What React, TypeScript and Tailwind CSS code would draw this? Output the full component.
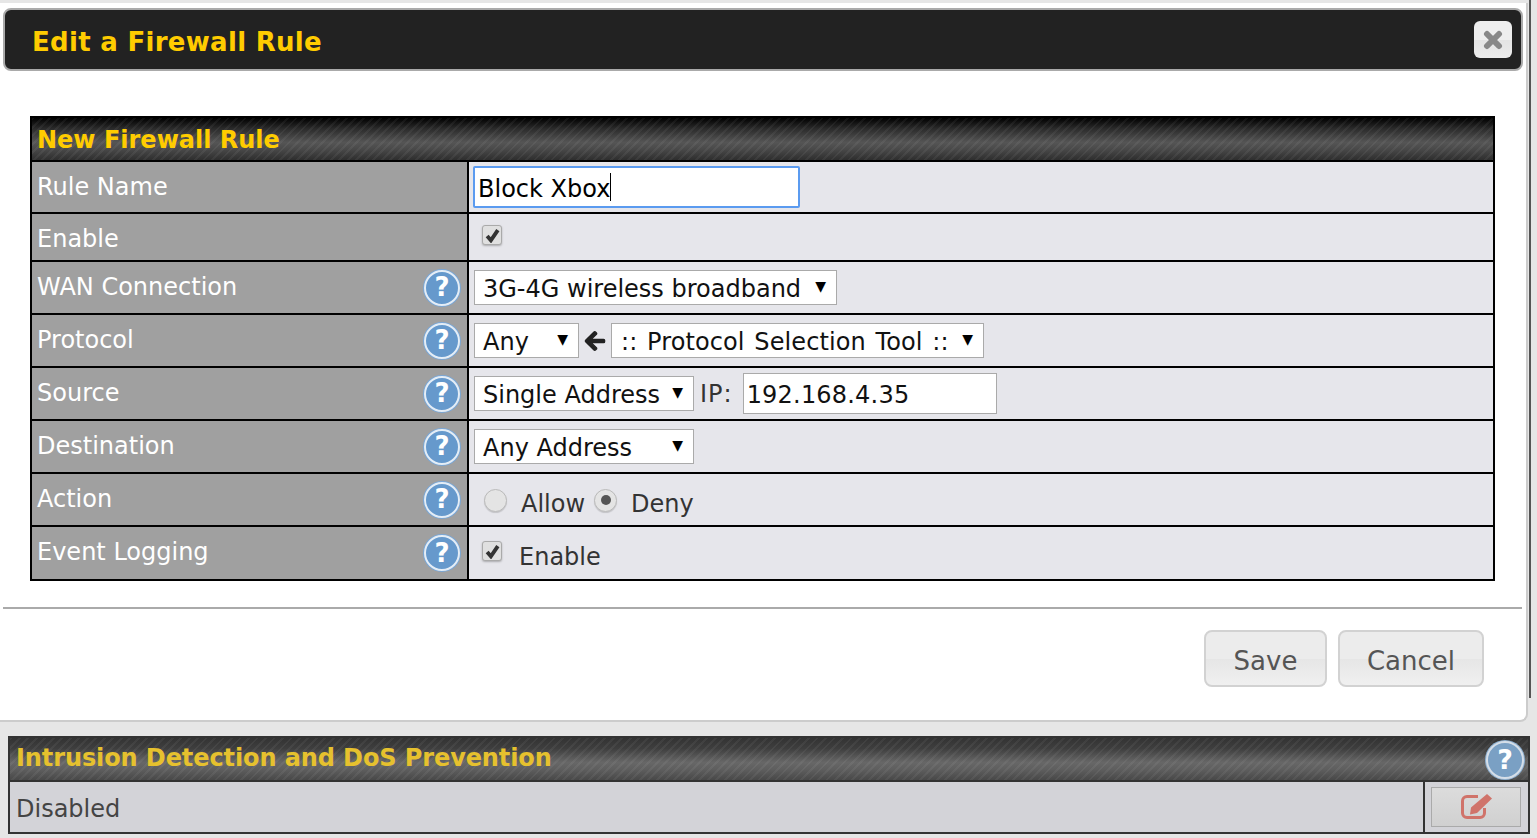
import type { ReactNode } from 'react'
import { FaArrowLeft } from 'react-icons/fa'

const stripes =
  'bg-[repeating-linear-gradient(135deg,rgba(255,255,255,0.05)_0px,rgba(255,255,255,0.05)_2px,transparent_2px,transparent_6px),linear-gradient(to_bottom,#000_0%,#2a2a2a_25%,#555_58%,#484848_75%,#2e2e2e_100%)]'
const stripesDim =
  'bg-[repeating-linear-gradient(135deg,rgba(255,255,255,0.05)_0px,rgba(255,255,255,0.05)_2px,transparent_2px,transparent_6px),linear-gradient(to_bottom,#333_0%,#3e3e3e_25%,#676767_58%,#5e5e5e_75%,#484848_100%)]'

function Help({ dim = false }: { dim?: boolean }) {
  return (
    <div
      className={`flex shrink-0 items-center justify-center rounded-full border-2 font-bold text-white ${
        dim
          ? 'mt-[2px] h-[38px] w-[38px] border-[#d5dee8] bg-[#7aa0c4] text-[27px] shadow-[0_0_0_1px_#8fb0d0]'
          : 'h-[36px] w-[36px] border-[#e4edf6] bg-[#6699cc] text-[26px] shadow-[0_0_0_1px_#7aa7d6]'
      }`}
    >
      ?
    </div>
  )
}

function Select({ text, width, spaced }: { text: string; width: string; spaced?: boolean }) {
  return (
    <div className={`flex h-[35px] items-center justify-between border border-[#aaa] bg-white pl-[8px] pr-[10px] text-[24px] text-[#111] ${width}`}>
      <span className={`mt-[2px] whitespace-nowrap ${spaced ? 'ml-px tracking-[0.1px] [word-spacing:2px]' : ''}`}>{text}</span>
      <span className="-mt-[4px] text-[14px] leading-none text-black">▼</span>
    </div>
  )
}

function Check({ className = '' }: { className?: string }) {
  return (
    <div className={`flex h-[20px] w-[20px] items-center justify-center rounded-[3px] border border-[#aaa] bg-[#e0e0e0] shadow-[0_1px_2px_rgba(0,0,0,0.25)] ${className}`}>
      <svg width="15" height="15" viewBox="0 0 14 14">
        <path d="M2 7.5l3.5 4L12 2" fill="none" stroke="#333" strokeWidth="3.6" />
      </svg>
    </div>
  )
}

function Radio({ on = false }: { on?: boolean }) {
  return (
    <div className="-mt-[7px] flex h-[23px] w-[23px] items-center justify-center rounded-full border border-[#bbb] bg-[#e4e4e4] shadow-[0_1px_1px_rgba(0,0,0,0.15)]">
      {on && <div className="h-[10px] w-[10px] rounded-full bg-[#555]" />}
    </div>
  )
}

function Row({
  label,
  help,
  height,
  last,
  labelClass = '-mt-[2px]',
  children,
}: {
  label: string
  help?: boolean
  height: string
  last?: boolean
  labelClass?: string
  children: ReactNode
}) {
  return (
    <div className={`flex ${height} ${last ? '' : 'border-b-2 border-black'}`}>
      <div className="flex w-[435px] shrink-0 items-center justify-between bg-[#a0a0a0] pl-[5px] pr-[7px] text-[24px] text-white">
        <span className={labelClass}>{label}</span>
        {help && <Help />}
      </div>
      <div className="flex flex-1 items-center border-l-2 border-black bg-[#e6e6eb] pl-[5px]">{children}</div>
    </div>
  )
}

export default function App() {
  return (
    <div className="relative h-[838px] w-full overflow-hidden bg-[#e6e6e6] pt-[3px] font-['DejaVu_Sans',sans-serif]">
      <div className="h-[719px] w-[1528px] rounded-br-lg border-r-2 border-b-2 border-[#ccc] bg-white pl-[3px] pt-[5px]">
        <div className="flex h-[63px] w-[1520px] items-center justify-between rounded-lg border-2 border-[#aaa] bg-[#222] pl-[27px] pr-[9px]">
          <h1 className="mt-[6px] text-[26px] font-bold tracking-[0.3px] text-[#ffcc00]">Edit a Firewall Rule</h1>
          <div className="flex h-[37px] w-[38px] items-center justify-center rounded-md bg-[linear-gradient(to_bottom,#eee_50%,#e4e4e4_52%,#ececec_100%)]">
            <svg width="20" height="20" viewBox="0 0 20 20">
              <path d="M4 4l12 12M16 4L4 16" stroke="#888" strokeWidth="6" strokeLinecap="round" fill="none" />
            </svg>
          </div>
        </div>

        <div className="ml-[27px] mt-[45px] w-[1465px] border-2 border-black">
          <div className={`flex h-[44px] items-center border-b-2 border-black pl-[5px] ${stripes}`}>
            <h2 className="mt-[2px] text-[24px] font-bold text-[#ffcc00]">New Firewall Rule</h2>
          </div>
          <Row label="Rule Name" height="h-[52px]" labelClass="">
            <div className="-ml-px flex h-[42px] w-[327px] items-center rounded-[2px] border-2 border-[#5b9bf0] bg-white pl-[3px] pt-[4px] text-[24px] text-black">
              Block Xbox<span className="-mt-[4px] h-[28px] w-px bg-black" />
            </div>
          </Row>
          <Row label="Enable" height="h-[48px]" labelClass="mt-[4px]">
            <Check className="-mt-[4px] ml-[8px]" />
          </Row>
          <Row label="WAN Connection" help height="h-[53px]">
            <Select text="3G-4G wireless broadband" width="w-[363px]" />
          </Row>
          <Row label="Protocol" help height="h-[53px]">
            <Select text="Any" width="w-[105px]" />
            <FaArrowLeft size={22} stroke="currentColor" strokeWidth={30} className="mx-[5px] text-[#222]" />
            <Select text=":: Protocol Selection Tool ::" width="w-[373px]" spaced />
          </Row>
          <Row label="Source" help height="h-[53px]">
            <Select text="Single Address" width="w-[220px]" />
            <span className="ml-[6px] text-[24px] tracking-[1px] text-[#333]">IP:</span>
            <input
              readOnly
              value="192.168.4.35"
              className="-mt-px ml-[10px] h-[41px] w-[254px] border border-[#aaa] bg-white pl-[3px] pt-[4px] text-[24px] tracking-[0.2px] text-[#111] outline-none"
            />
          </Row>
          <Row label="Destination" help height="h-[53px]">
            <Select text="Any Address" width="w-[220px]" />
          </Row>
          <Row label="Action" help height="h-[53px]">
            <div className="ml-[10px] mt-[8px] flex items-center text-[24px] text-[#333]">
              <Radio />
              <span className="ml-[14px]">Allow</span>
              <div className="ml-[9px]">
                <Radio on />
              </div>
              <span className="ml-[14px]">Deny</span>
            </div>
          </Row>
          <Row label="Event Logging" help height="h-[52px]" last>
            <div className="ml-[8px] mt-[8px] flex items-center text-[24px] text-[#333]">
              <Check className="-mt-[12px]" />
              <span className="ml-[17px]">Enable</span>
            </div>
          </Row>
        </div>

        <div className="mt-[26px] h-[2px] w-[1519px] bg-[#aaa]" />

        <div className="mt-[21px] flex w-[1481px] justify-end gap-[11px]">
          <button className="h-[57px] w-[123px] rounded-lg border-2 border-[#d2d2d2] bg-[linear-gradient(to_bottom,#ececec_50%,#e6e6e6_52%,#f0f0f0_100%)] pt-[5px] text-[26px] text-[#555]">
            Save
          </button>
          <button className="h-[57px] w-[146px] rounded-lg border-2 border-[#d2d2d2] bg-[linear-gradient(to_bottom,#ececec_50%,#e6e6e6_52%,#f0f0f0_100%)] pt-[5px] text-[26px] text-[#555]">
            Cancel
          </button>
        </div>
      </div>

      <div className="ml-[8px] mt-[14px] w-[1522px] border-2 border-[#333]">
        <div className={`flex h-[44px] items-center justify-between border-b-2 border-[#333] pl-[6px] pr-[4px] ${stripesDim}`}>
          <h2 className="-mt-[2px] text-[24px] font-bold tracking-[-0.1px] text-[#e6c12e]">Intrusion Detection and DoS Prevention</h2>
          <Help dim />
        </div>
        <div className="flex h-[50px] bg-[#d3d3d8]">
          <div className="flex flex-1 items-center pl-[6px] pt-[4px] text-[24px] text-[#444]">Disabled</div>
          <div className="flex w-[105px] items-center border-l-2 border-[#333] pl-[6px]">
            <div className="flex h-[40px] w-[90px] items-center justify-center border border-[#aaa] bg-[linear-gradient(to_bottom,#dcdcdc,#d0d0d0)]">
              <svg width="32" height="26" viewBox="0 0 32 26">
                <path d="M18 2.5H7a4.5 4.5 0 0 0-4.5 4.500V19A4.500 4.500 0 0 0 7 23.500H20a4.500 4.500 0 0 0 4.500-4.500V14" fill="none" stroke="#d0736a" strokeWidth="3" />
                <path d="M27 0l5 4.500L17 19l-7 1.500 1-7z" fill="#d0736a" />
              </svg>
            </div>
          </div>
        </div>
      </div>

      <div className="absolute left-[1529px] top-0 h-[698px] w-[2px] bg-[#555]" />
    </div>
  )
}
